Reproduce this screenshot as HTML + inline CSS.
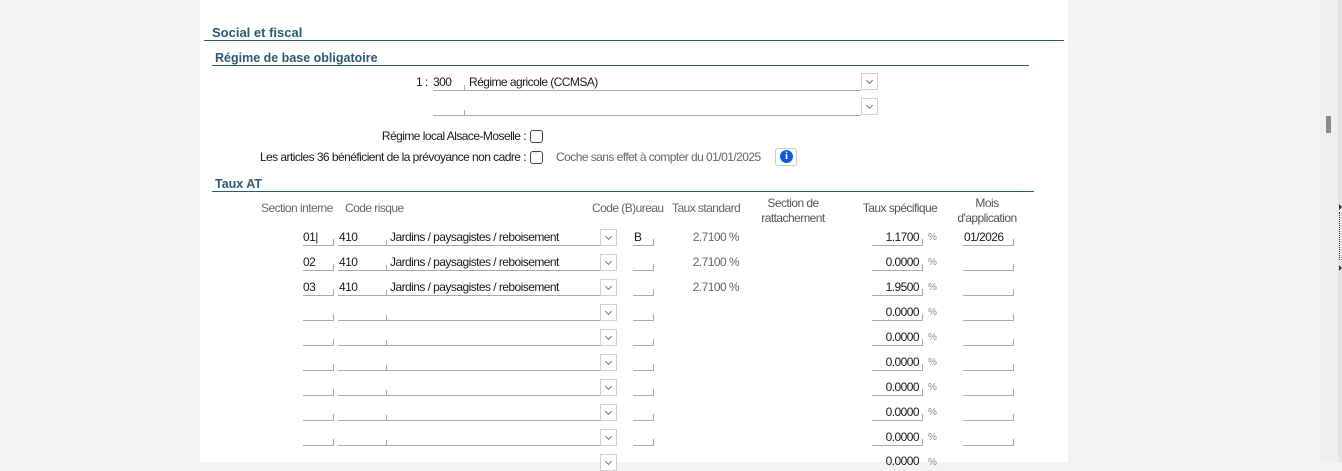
<!DOCTYPE html>
<html><head><meta charset="utf-8"><style>
*{margin:0;padding:0;box-sizing:border-box}
body{width:1342px;height:462px;overflow:hidden;background:#f3f3f3;position:relative;font-family:"Liberation Sans",sans-serif;font-size:12px;color:#1a1a1a}
.p{position:absolute;left:200px;top:0;width:868px;height:462px;background:#fff}
.a{position:absolute;white-space:nowrap;line-height:15px;letter-spacing:-0.55px}
.t{position:absolute;font-weight:bold;color:#2b5b70;white-space:nowrap}
.ln{position:absolute;height:1px;background:#2b5b70}
.f{position:absolute;height:17px;border-bottom:1px solid #a9a9a9;line-height:17px;white-space:nowrap;letter-spacing:-0.55px}
.tr:after{content:"";position:absolute;right:0;bottom:0;width:1px;height:6px;background:#a9a9a9}
.tl:before{content:"";position:absolute;left:0;bottom:0;width:1px;height:5px;background:#a9a9a9}
.dd{position:absolute;width:17px;height:17px;border:1px solid #d0d0d0;background:#fff}
.dd:after{content:"";position:absolute;left:5px;top:4px;width:4px;height:4px;border-right:1px solid #777;border-bottom:1px solid #777;transform:rotate(45deg)}
.g{color:#666}
.h{position:absolute;color:#555;text-align:center;line-height:15px;white-space:nowrap;letter-spacing:-0.55px}
.cb{position:absolute;width:13px;height:13px;border:1px solid #444;border-radius:3px;background:#fff}
.pc{position:absolute;left:928px;color:#888;font-size:10px;line-height:15px}
</style></head><body>
<div class="p"></div>
<div class="t" style="left:212px;top:25px;font-size:13px">Social et fiscal</div>
<div class="ln" style="left:204px;top:40px;width:860px"></div>
<div class="t" style="left:215px;top:51px;font-size:12.5px">Régime de base obligatoire</div>
<div class="ln" style="left:212px;top:65px;width:817px"></div>

<div class="a" style="left:416px;top:75px">1 :</div>
<div class="f" style="left:433px;top:74px;width:31px">300</div>
<div class="f tl" style="left:464px;top:74px;width:397px;padding-left:5px">Régime agricole (CCMSA)</div>
<div class="dd" style="left:861px;top:73px"></div>
<div class="f" style="left:433px;top:99px;width:31px"></div>
<div class="f tl" style="left:464px;top:99px;width:397px"></div>
<div class="dd" style="left:861px;top:98px"></div>

<div class="a" style="right:816px;top:129px">Régime local Alsace-Moselle :</div>
<div class="cb" style="left:530px;top:130px"></div>
<div class="a" style="right:816px;top:150px">Les articles 36 bénéficient de la prévoyance non cadre :</div>
<div class="cb" style="left:530px;top:151px"></div>
<div class="a g" style="left:556px;top:150px">Coche sans effet à compter du 01/01/2025</div>
<div style="position:absolute;left:775px;top:148px;width:22px;height:18px;border:1px solid #ccc;border-radius:3px;background:#fff"><div style="position:absolute;left:4px;top:1px;width:13px;height:13px;border-radius:50%;background:#0a5ed7;color:#fff;font:bold 10px 'Liberation Serif',serif;text-align:center;line-height:13px">i</div></div>

<div class="t" style="left:215px;top:177px;font-size:12.5px">Taux AT</div>
<div class="ln" style="left:212px;top:191px;width:822px"></div>

<div class="a g" style="left:261px;top:201px">Section interne</div>
<div class="a g" style="left:345px;top:201px">Code risque</div>
<div class="a g" style="left:592px;top:201px">Code (B)ureau</div>
<div class="a g" style="left:672px;top:201px">Taux standard</div>
<div class="h" style="left:753px;top:196px;width:80px">Section de<br>rattachement</div>
<div class="h" style="left:855px;top:201px;width:90px">Taux spécifique</div>
<div class="h" style="left:947px;top:196px;width:80px">Mois<br>d'application</div>

<div class="f tr" style="left:303px;top:229px;width:31px">01|</div><div class="f" style="left:338px;top:229px;width:48px;padding-left:1px">410</div><div class="f tl" style="left:386px;top:229px;width:215px;padding-left:4px">Jardins / paysagistes / reboisement</div><div class="dd" style="left:600px;top:229px"></div><div class="f tr" style="left:633px;top:229px;width:21px;padding-left:1px">B</div><div class="a g" style="right:603px;top:230px">2.7100 %</div><div class="f tr" style="left:872px;top:229px;width:51px;text-align:right;padding-right:4px">1.1700</div><div class="pc" style="top:230px">%</div><div class="f tr" style="left:963px;top:229px;width:51px;padding-left:1px">01/2026</div>

<div class="f tr" style="left:303px;top:254px;width:31px">02</div><div class="f" style="left:338px;top:254px;width:48px;padding-left:1px">410</div><div class="f tl" style="left:386px;top:254px;width:215px;padding-left:4px">Jardins / paysagistes / reboisement</div><div class="dd" style="left:600px;top:254px"></div><div class="f tr" style="left:633px;top:254px;width:21px"></div><div class="a g" style="right:603px;top:255px">2.7100 %</div><div class="f tr" style="left:872px;top:254px;width:51px;text-align:right;padding-right:4px">0.0000</div><div class="pc" style="top:255px">%</div><div class="f tr" style="left:963px;top:254px;width:51px"></div>

<div class="f tr" style="left:303px;top:279px;width:31px">03</div><div class="f" style="left:338px;top:279px;width:48px;padding-left:1px">410</div><div class="f tl" style="left:386px;top:279px;width:215px;padding-left:4px">Jardins / paysagistes / reboisement</div><div class="dd" style="left:600px;top:279px"></div><div class="f tr" style="left:633px;top:279px;width:21px"></div><div class="a g" style="right:603px;top:280px">2.7100 %</div><div class="f tr" style="left:872px;top:279px;width:51px;text-align:right;padding-right:4px">1.9500</div><div class="pc" style="top:280px">%</div><div class="f tr" style="left:963px;top:279px;width:51px"></div>

<div class="f tr" style="left:303px;top:304px;width:31px"></div><div class="f" style="left:338px;top:304px;width:48px"></div><div class="f tl" style="left:386px;top:304px;width:215px"></div><div class="dd" style="left:600px;top:304px"></div><div class="f tr" style="left:633px;top:304px;width:21px"></div><div class="f tr" style="left:872px;top:304px;width:51px;text-align:right;padding-right:4px">0.0000</div><div class="pc" style="top:305px">%</div><div class="f tr" style="left:963px;top:304px;width:51px"></div>

<div class="f tr" style="left:303px;top:329px;width:31px"></div><div class="f" style="left:338px;top:329px;width:48px"></div><div class="f tl" style="left:386px;top:329px;width:215px"></div><div class="dd" style="left:600px;top:329px"></div><div class="f tr" style="left:633px;top:329px;width:21px"></div><div class="f tr" style="left:872px;top:329px;width:51px;text-align:right;padding-right:4px">0.0000</div><div class="pc" style="top:330px">%</div><div class="f tr" style="left:963px;top:329px;width:51px"></div>

<div class="f tr" style="left:303px;top:354px;width:31px"></div><div class="f" style="left:338px;top:354px;width:48px"></div><div class="f tl" style="left:386px;top:354px;width:215px"></div><div class="dd" style="left:600px;top:354px"></div><div class="f tr" style="left:633px;top:354px;width:21px"></div><div class="f tr" style="left:872px;top:354px;width:51px;text-align:right;padding-right:4px">0.0000</div><div class="pc" style="top:355px">%</div><div class="f tr" style="left:963px;top:354px;width:51px"></div>

<div class="f tr" style="left:303px;top:379px;width:31px"></div><div class="f" style="left:338px;top:379px;width:48px"></div><div class="f tl" style="left:386px;top:379px;width:215px"></div><div class="dd" style="left:600px;top:379px"></div><div class="f tr" style="left:633px;top:379px;width:21px"></div><div class="f tr" style="left:872px;top:379px;width:51px;text-align:right;padding-right:4px">0.0000</div><div class="pc" style="top:380px">%</div><div class="f tr" style="left:963px;top:379px;width:51px"></div>

<div class="f tr" style="left:303px;top:404px;width:31px"></div><div class="f" style="left:338px;top:404px;width:48px"></div><div class="f tl" style="left:386px;top:404px;width:215px"></div><div class="dd" style="left:600px;top:404px"></div><div class="f tr" style="left:633px;top:404px;width:21px"></div><div class="f tr" style="left:872px;top:404px;width:51px;text-align:right;padding-right:4px">0.0000</div><div class="pc" style="top:405px">%</div><div class="f tr" style="left:963px;top:404px;width:51px"></div>

<div class="f tr" style="left:303px;top:429px;width:31px"></div><div class="f" style="left:338px;top:429px;width:48px"></div><div class="f tl" style="left:386px;top:429px;width:215px"></div><div class="dd" style="left:600px;top:429px"></div><div class="f tr" style="left:633px;top:429px;width:21px"></div><div class="f tr" style="left:872px;top:429px;width:51px;text-align:right;padding-right:4px">0.0000</div><div class="pc" style="top:430px">%</div><div class="f tr" style="left:963px;top:429px;width:51px"></div>

<div class="dd" style="left:600px;top:454px"></div><div class="a" style="left:872px;top:454px;width:51px;text-align:right;padding-right:4px">0.0000</div><div class="pc" style="top:455px">%</div>

<div style="position:absolute;left:1318px;top:0;width:1px;height:462px;background:#fafafa"></div>
<div style="position:absolute;left:1319px;top:0;width:19px;height:462px;background:#efefef"></div>
<div style="position:absolute;left:1338px;top:0;width:4px;height:462px;background:#e4e4e4"></div>
<div style="position:absolute;left:1326px;top:116px;width:5px;height:17px;background:#8a8a8a"></div>
<div style="position:absolute;left:1339px;top:204px;width:0;height:0;border-top:3px solid transparent;border-bottom:3px solid transparent;border-left:3px solid #334"></div>
<div style="position:absolute;left:1339px;top:265px;width:0;height:0;border-top:3px solid transparent;border-bottom:3px solid transparent;border-left:3px solid #334"></div>
<div style="position:absolute;left:1339px;top:212px;width:0;height:48px;border-left:1px dotted #336"></div>
</body></html>
